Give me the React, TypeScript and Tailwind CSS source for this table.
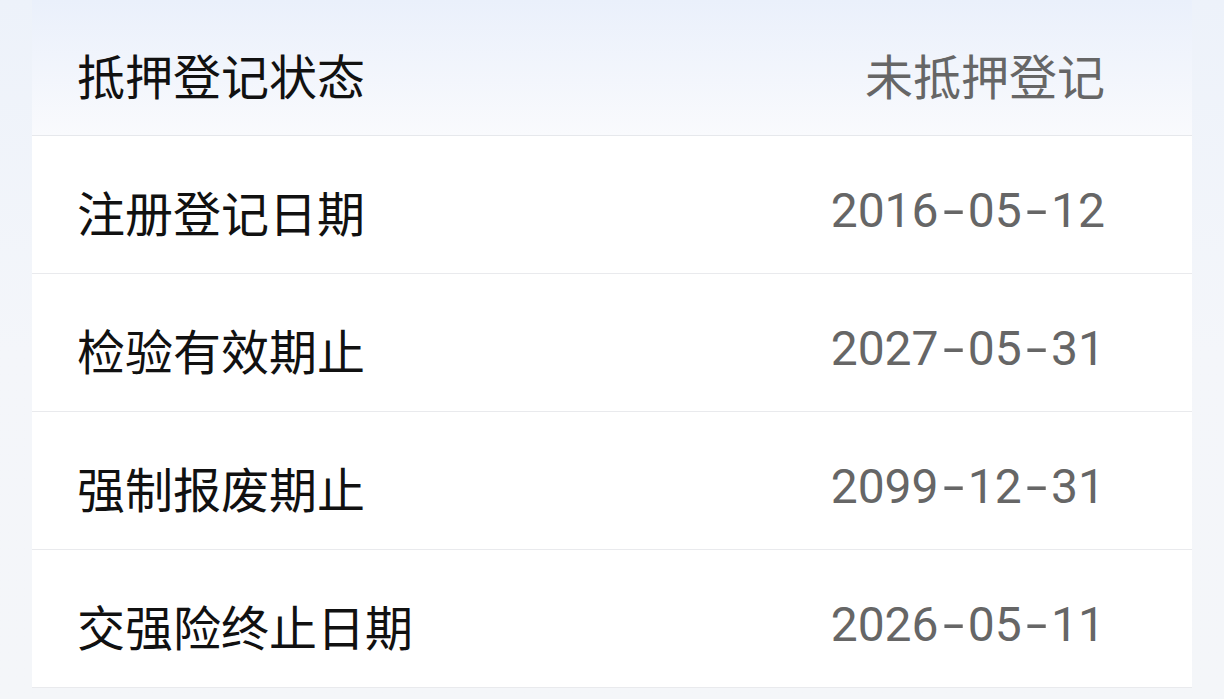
const rows = [
  { label: '注册登记日期', value: '2016-05-12' },
  { label: '检验有效期止', value: '2027-05-31' },
  { label: '强制报废期止', value: '2099-12-31' },
  { label: '交强险终止日期', value: '2026-05-11' },
];

const cjk = { fontFamily: '"Noto Sans CJK SC", "Noto Sans", sans-serif' };
const num = { fontFamily: 'Roboto, "Noto Sans CJK SC", sans-serif' };

function DateValue({ value }: { value: string }) {
  const parts = value.split('-');
  return (
    <span className="flex items-center text-[48px] leading-none text-[#666666]" style={num}>
      {parts.map((p, i) => (
        <span key={i} className="flex items-center">
          {i > 0 && <span className="mx-[8px] inline-block scale-x-[1.6]">-</span>}
          <span>{p}</span>
        </span>
      ))}
    </span>
  );
}

export default function App() {
  return (
    <div className="min-h-[699px] w-[1224px] overflow-hidden bg-gradient-to-b from-[#edf2fa] via-[#f4f6fa] to-[#f4f6f9] px-[32px]">
      <div className="bg-white">
        {/* header row */}
        <div className="flex h-[136px] items-center justify-between border-b border-[#e6e8ec] bg-gradient-to-b from-[#eaf0fb] to-[#f9fafd] pl-[45px] pr-[87px] pt-[12px]">
          <span className="text-[48px] leading-none text-[#111111]" style={cjk}>
            抵押登记状态
          </span>
          <span className="text-[48px] leading-none text-[#666666]" style={cjk}>
            未抵押登记
          </span>
        </div>

        {rows.map((r) => (
          <div
            key={r.label}
            className="flex h-[138px] items-center justify-between border-b border-[#e9eaed] pl-[45px] pr-[87px] pt-[12px]"
          >
            <span className="text-[48px] leading-none text-[#111111]" style={cjk}>
              {r.label}
            </span>
            <DateValue value={r.value} />
          </div>
        ))}
      </div>
    </div>
  );
}
